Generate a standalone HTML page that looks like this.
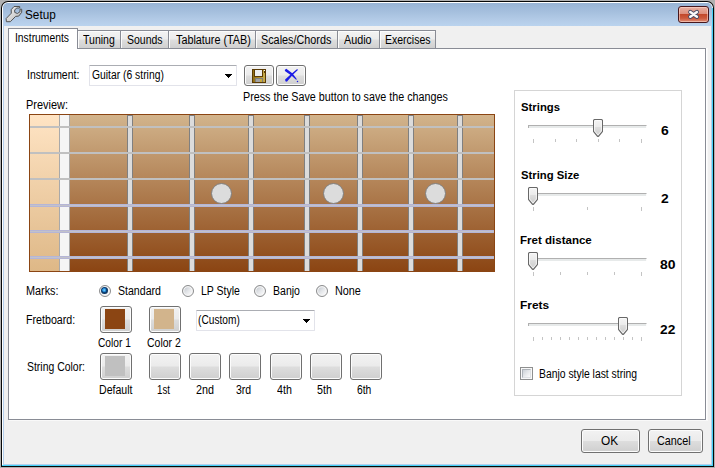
<!DOCTYPE html>
<html lang="en"><head><meta charset="utf-8"><title>Setup</title>
<style>
html,body{margin:0;padding:0}
body{width:715px;height:468px;position:relative;overflow:hidden;background:#f0f0f0;font-family:"Liberation Sans",sans-serif;font-size:12px;color:#000}
.a{position:absolute;box-sizing:border-box}
.t{position:absolute;white-space:nowrap;line-height:16px;transform-origin:0 0;color:#000}
/* window frame */
#w0{left:0;top:0;width:715px;height:468px;background:#b1b1b1}
#w1{left:1px;top:1px;width:713px;height:466px;background:#070707;border-radius:7px 7px 0 0}
#w2{left:2px;top:2px;width:711px;height:464px;background:#fff;border-radius:6px 6px 0 0;overflow:hidden}
#w2r{right:0;top:6px;width:1px;bottom:0;background:#45d2f7}
#w2b{left:0;right:0;bottom:0;height:1px;background:#45d2f7}
#w3{left:3px;top:3px;width:709px;height:462px;background:#b5cfec;border-radius:5px 5px 0 0}
#titlebar{left:3px;top:3px;width:709px;height:23px;border-radius:5px 5px 0 0;background:linear-gradient(180deg,#98b4d5 0%,#a6c0de 40%,#b2cae6 70%,#bad3ee 100%)}
#client{left:4px;top:26px;width:707px;height:438px;background:#f0f0f0}
/* close button */
#close{left:678px;top:6px;width:31px;height:17px;border:1px solid #47171d;border-radius:3px;background:linear-gradient(180deg,#e9b0a2 0%,#dd8f7d 45%,#c2492c 50%,#cc5a3d 75%,#e0907a 100%);box-shadow:inset 0 0 0 1px rgba(255,220,210,.55)}
/* tabs */
.tab{top:30px;height:18px;border-top:1px solid #898c95;border-right:1px solid #898c95;background:linear-gradient(180deg,#f3f3f3 0%,#ececec 48%,#dedede 52%,#d0d0d0 100%);box-shadow:inset 1px 1px 0 #fcfcfc}
#tabsel{left:8px;top:28px;width:70px;height:21px;border:1px solid #898c95;border-bottom:none;background:#fff}
#pane{left:8px;top:48px;width:698px;height:372px;border:1px solid #898c95;background:#fff}
#paneR{left:706px;top:48px;width:2px;height:373px;background:linear-gradient(90deg,#fff 50%,#f8f8f8 50%)}
#paneB{left:9px;top:420px;width:699px;height:1px;background:#f9f9f9}
/* combo */
.combo{border:1px solid #e2e3ea;border-top-color:#abadb3;border-radius:1px;background:#fff}
.arrow{width:0;height:0;border-left:3.5px solid transparent;border-right:3.5px solid transparent;border-top:4px solid #000}
/* buttons */
.btn{border:1px solid #707070;border-radius:3px;background:linear-gradient(180deg,#f2f2f2 0%,#ebebeb 48%,#dddddd 52%,#cfcfcf 100%);box-shadow:inset 0 0 0 1px #fcfcfc}
.sw{position:absolute;box-sizing:border-box}
/* radio */
.radio{width:12px;height:12px;border-radius:50%;border:1px solid #8b8c8d;background:linear-gradient(135deg,#c2c7cd 10%,#e4e6e9 50%,#fdfdfd 90%);box-shadow:inset 0 0 0 1.2px #f6f6f6}
.radio .on{left:1px;top:1px;width:7px;height:7px;border-radius:50%;background:radial-gradient(circle 3.5px at 46% 44%,#a6e6fb 0%,#35a4e8 30%,#1f7fd0 52%,#0f4378 66%,#0c3560 100%)}
/* slider */
.track{height:3px;border:1px solid;border-color:#b0b0b0 #fcfcfc #fcfcfc #b0b0b0;border-bottom:none;background:#e7eaea}
.tick{width:1px;height:3px;background:#c4c4c4}
.tick.l{height:4px}
.group{border:1px solid #d5d5d5;background:#fff}
.check{width:13px;height:13px;border:1px solid #8e8f8f;background:#f8f8f8}
.check .ci{left:1px;top:1px;width:9px;height:9px;border:1px solid;border-color:#aeb3b9 #dfe1e4 #dfe1e4 #aeb3b9;background:linear-gradient(135deg,#cbd0d6 0%,#e6e8ea 50%,#fbfbfb 100%)}
.fret{top:0;width:6px;height:156px;background:#dcdcdc;border:1px solid #808080;border-bottom:none}
.dot{top:68px;width:21px;height:21px;border-radius:50%;background:#dcdcdc;border:1px solid #808080}
.str{left:0;width:464px;height:2px;background:#c0c0c0}
.str.w{height:3px;background:linear-gradient(180deg,#b5b5d6 0,#b5b5d6 1px,#c2c2ca 1px,#c2c2ca 2px,#b5b5d6 2px)}
.thumb{position:absolute}

</style></head>
<body>
<div class="a" id="w0"></div>
<div class="a" id="w1"></div>
<div class="a" id="w2"><div class="a" id="w2r"></div><div class="a" id="w2b"></div></div>
<div class="a" id="w3"></div>
<div class="a" id="titlebar"></div>
<div class="a" id="client"></div>
<!-- title icon: wrench -->
<!-- close -->
<div class="a" id="close"></div>
<svg class="a" style="left:686px;top:8px" width="15" height="13" viewBox="686 8 15 13">
 <path d="M690.3 12.1 L696.9 16.8 M696.9 12.1 L690.3 16.8" stroke="#474b66" stroke-width="4.3" stroke-linecap="round" fill="none"/>
 <path d="M690.3 12.1 L696.9 16.8 M696.9 12.1 L690.3 16.8" stroke="#fafafa" stroke-width="2.5" stroke-linecap="round" fill="none"/>
</svg>
<!-- tab pane -->
<div class="a" id="paneR"></div><div class="a" id="paneB"></div>
<div class="a" id="pane"></div>
<div class="a tab" style="left:78px;width:43px"></div>
<div class="a tab" style="left:121px;width:48px"></div>
<div class="a tab" style="left:169px;width:87px"></div>
<div class="a tab" style="left:256px;width:82px"></div>
<div class="a tab" style="left:338px;width:42px"></div>
<div class="a tab" style="left:380px;width:56px"></div>
<div class="a" id="tabsel"></div>
<!-- instrument combo -->
<div class="a combo" style="left:89px;top:65px;width:148px;height:21px"></div>
<!-- save / delete buttons -->
<div class="a btn" style="left:244px;top:65px;width:30px;height:21px"></div>
<div class="a btn" style="left:276px;top:65px;width:30px;height:21px"></div>
<!-- fretboard preview -->
<div class="a" id="fb" style="left:29px;top:114px;width:466px;height:158px;border:1px solid #8b4513;background:linear-gradient(180deg,#d2b48c 0%,#8b4513 100%);overflow:hidden">
 <div class="a" style="left:0;top:0;width:29px;height:156px;background:linear-gradient(180deg,#ffe4c4 0%,#deb887 100%)"></div>
 <div class="a" style="left:29px;top:0;width:11px;height:156px;background:#f5f5f5;border-left:1px solid #a9a9a9;border-right:1px solid #a9a9a9"></div>
 <!-- frets -->
 <div class="a fret" style="left:97px"></div>
 <div class="a fret" style="left:159px"></div>
 <div class="a fret" style="left:218px"></div>
 <div class="a fret" style="left:274px"></div>
 <div class="a fret" style="left:327px"></div>
 <div class="a fret" style="left:378px"></div>
 <div class="a fret" style="left:427px"></div>
 <!-- marks -->
 <div class="a dot" style="left:181px"></div>
 <div class="a dot" style="left:293px"></div>
 <div class="a dot" style="left:395px"></div>
 <!-- strings -->
 <div class="a str" style="top:11px"></div>
 <div class="a str" style="top:37px"></div>
 <div class="a str" style="top:63px"></div>
 <div class="a str w" style="top:89px"></div>
 <div class="a str w" style="top:115px"></div>
 <div class="a str w" style="top:141px"></div>
</div>
<!-- marks radios -->
<div class="a radio" style="left:99px;top:285px"><div class="a on"></div></div>
<div class="a radio" style="left:182px;top:285px"></div>
<div class="a radio" style="left:254px;top:285px"></div>
<div class="a radio" style="left:316px;top:285px"></div>
<!-- fretboard colour buttons -->
<div class="a btn" style="left:100px;top:306px;width:32px;height:27px"><div class="sw" style="left:4px;top:2px;width:20px;height:20px;background:#8b4513"></div></div>
<div class="a btn" style="left:149px;top:306px;width:32px;height:27px"><div class="sw" style="left:4px;top:2px;width:20px;height:20px;background:#d2b48c"></div></div>
<div class="a combo" style="left:196px;top:310px;width:119px;height:21px"></div>
<!-- string colour buttons -->
<div class="a btn" style="left:100px;top:353px;width:32px;height:27px"><div class="sw" style="left:4px;top:2px;width:20px;height:20px;background:#c0c0c0"></div></div>
<div class="a btn" style="left:149px;top:353px;width:32px;height:27px"></div>
<div class="a btn" style="left:189px;top:353px;width:32px;height:27px"></div>
<div class="a btn" style="left:229px;top:353px;width:32px;height:27px"></div>
<div class="a btn" style="left:270px;top:353px;width:32px;height:27px"></div>
<div class="a btn" style="left:310px;top:353px;width:32px;height:27px"></div>
<div class="a btn" style="left:350px;top:353px;width:32px;height:27px"></div>
<!-- right group -->
<div class="a group" style="left:514px;top:90px;width:168px;height:306px"></div>
<div class="a track" style="left:528px;top:125px;width:119px"></div>
<div class="a tick l" style="left:533px;top:139px"></div>
<div class="a tick" style="left:555px;top:139px"></div>
<div class="a tick" style="left:576px;top:139px"></div>
<div class="a tick" style="left:598px;top:139px"></div>
<div class="a tick" style="left:619px;top:139px"></div>
<div class="a tick l" style="left:641px;top:139px"></div>
<svg class="a" style="left:593px;top:119px" width="10" height="19" viewBox="0 0 10 19"><defs><linearGradient id="g119" x1="0" y1="0" x2="0" y2="1"><stop offset="0" stop-color="#f5f5f5"/><stop offset=".42" stop-color="#ebebeb"/><stop offset=".45" stop-color="#dedede"/><stop offset="1" stop-color="#cbcbcb"/></linearGradient></defs><path d="M1.9 .5 H8.1 Q9.5 .5 9.5 1.9 V12.4 L5.7 17.1 Q5 17.8 4.3 17.1 L.5 12.4 V1.9 Q.5 .5 1.9 .5 Z" fill="url(#g119)" stroke="#686868" stroke-width="1.1"/><path d="M2.2 1.6 H7.8 Q8.4 1.6 8.4 2.2 V12 L5 16 L1.6 12 V2.2 Q1.6 1.6 2.2 1.6 Z" fill="none" stroke="#fdfdfd" stroke-width=".9" opacity=".85"/></svg>
<div class="a track" style="left:528px;top:193px;width:119px"></div>
<div class="a tick l" style="left:533px;top:207px"></div>
<div class="a tick" style="left:587px;top:207px"></div>
<div class="a tick l" style="left:641px;top:207px"></div>
<svg class="a" style="left:528px;top:187px" width="10" height="19" viewBox="0 0 10 19"><defs><linearGradient id="g187" x1="0" y1="0" x2="0" y2="1"><stop offset="0" stop-color="#f5f5f5"/><stop offset=".42" stop-color="#ebebeb"/><stop offset=".45" stop-color="#dedede"/><stop offset="1" stop-color="#cbcbcb"/></linearGradient></defs><path d="M1.9 .5 H8.1 Q9.5 .5 9.5 1.9 V12.4 L5.7 17.1 Q5 17.8 4.3 17.1 L.5 12.4 V1.9 Q.5 .5 1.9 .5 Z" fill="url(#g187)" stroke="#686868" stroke-width="1.1"/><path d="M2.2 1.6 H7.8 Q8.4 1.6 8.4 2.2 V12 L5 16 L1.6 12 V2.2 Q1.6 1.6 2.2 1.6 Z" fill="none" stroke="#fdfdfd" stroke-width=".9" opacity=".85"/></svg>
<div class="a track" style="left:528px;top:258px;width:119px"></div>
<div class="a tick l" style="left:533px;top:272px"></div>
<div class="a tick" style="left:560px;top:272px"></div>
<div class="a tick" style="left:587px;top:272px"></div>
<div class="a tick" style="left:614px;top:272px"></div>
<div class="a tick l" style="left:641px;top:272px"></div>
<svg class="a" style="left:528px;top:252px" width="10" height="19" viewBox="0 0 10 19"><defs><linearGradient id="g252" x1="0" y1="0" x2="0" y2="1"><stop offset="0" stop-color="#f5f5f5"/><stop offset=".42" stop-color="#ebebeb"/><stop offset=".45" stop-color="#dedede"/><stop offset="1" stop-color="#cbcbcb"/></linearGradient></defs><path d="M1.9 .5 H8.1 Q9.5 .5 9.5 1.9 V12.4 L5.7 17.1 Q5 17.8 4.3 17.1 L.5 12.4 V1.9 Q.5 .5 1.9 .5 Z" fill="url(#g252)" stroke="#686868" stroke-width="1.1"/><path d="M2.2 1.6 H7.8 Q8.4 1.6 8.4 2.2 V12 L5 16 L1.6 12 V2.2 Q1.6 1.6 2.2 1.6 Z" fill="none" stroke="#fdfdfd" stroke-width=".9" opacity=".85"/></svg>
<div class="a track" style="left:528px;top:323px;width:119px"></div>
<div class="a tick l" style="left:533px;top:337px"></div>
<div class="a tick" style="left:542px;top:337px"></div>
<div class="a tick" style="left:551px;top:337px"></div>
<div class="a tick" style="left:560px;top:337px"></div>
<div class="a tick" style="left:569px;top:337px"></div>
<div class="a tick" style="left:578px;top:337px"></div>
<div class="a tick" style="left:587px;top:337px"></div>
<div class="a tick" style="left:596px;top:337px"></div>
<div class="a tick" style="left:605px;top:337px"></div>
<div class="a tick" style="left:614px;top:337px"></div>
<div class="a tick" style="left:623px;top:337px"></div>
<div class="a tick" style="left:632px;top:337px"></div>
<div class="a tick l" style="left:641px;top:337px"></div>
<svg class="a" style="left:618px;top:317px" width="10" height="19" viewBox="0 0 10 19"><defs><linearGradient id="g317" x1="0" y1="0" x2="0" y2="1"><stop offset="0" stop-color="#f5f5f5"/><stop offset=".42" stop-color="#ebebeb"/><stop offset=".45" stop-color="#dedede"/><stop offset="1" stop-color="#cbcbcb"/></linearGradient></defs><path d="M1.9 .5 H8.1 Q9.5 .5 9.5 1.9 V12.4 L5.7 17.1 Q5 17.8 4.3 17.1 L.5 12.4 V1.9 Q.5 .5 1.9 .5 Z" fill="url(#g317)" stroke="#686868" stroke-width="1.1"/><path d="M2.2 1.6 H7.8 Q8.4 1.6 8.4 2.2 V12 L5 16 L1.6 12 V2.2 Q1.6 1.6 2.2 1.6 Z" fill="none" stroke="#fdfdfd" stroke-width=".9" opacity=".85"/></svg>
<div class="a check" style="left:520px;top:367px"><div class="a ci"></div></div>
<!-- OK / Cancel -->
<div class="a btn" style="left:581px;top:429px;width:59px;height:24px"></div>
<div class="a btn" style="left:648px;top:429px;width:55px;height:24px"></div>
<!-- icon overlay (page pixel coordinates) -->
<svg class="a" id="icons" style="left:0;top:0;pointer-events:none" width="715" height="468" viewBox="0 0 715 468">
 <defs>
  <linearGradient id="wg" x1="0" y1="0" x2="1" y2="1"><stop offset="0" stop-color="#f4f4f4"/><stop offset=".55" stop-color="#d4d4d4"/><stop offset="1" stop-color="#a9a9a9"/></linearGradient>
  <linearGradient id="fg" x1="0" y1="0" x2="1" y2="0"><stop offset="0" stop-color="#8e6c12"/><stop offset=".3" stop-color="#a8841f"/><stop offset="1" stop-color="#c7ad4e"/></linearGradient>
 </defs>
 <!-- wrench -->
 <path d="M6.1 18.6 L11.3 13.2 L11.2 9.7 L14 6.5 L19.7 6.5 L19.7 8 L16.9 8 L14.7 9.8 L14.7 12.4 L17.4 13.5 L20 11.7 L20 9.2 L21.7 9.2 L21.7 12.3 L18.7 16.1 L15.6 16.4 L10.4 21.7 L6.4 21.7 Z" fill="url(#wg)" stroke="#4c4c4c" stroke-width=".95" stroke-linejoin="round"/>
 <!-- floppy -->
 <g shape-rendering="crispEdges">
  <rect x="252" y="69" width="14" height="14" fill="#5a3a04"/>
  <rect x="253" y="70" width="12" height="12" fill="url(#fg)"/>
  <rect x="254" y="69" width="9" height="8" fill="#5a3a04"/>
  <rect x="255" y="70" width="7" height="6" fill="#ededed"/>
  <rect x="255" y="78" width="8" height="4" fill="#7d7d7d"/>
  <rect x="256" y="79" width="4" height="3" fill="#a2a2a2"/>
  <rect x="260" y="79" width="2" height="3" fill="#c9aa3c"/>
  <rect x="264" y="70" width="1" height="1" fill="#ffffff"/>
  <rect x="264" y="71" width="1" height="2" fill="#5a3a04"/>
 </g>
 <!-- delete X -->
 <g fill="#1b1be6">
  <path d="M284.7 69.9 L286.3 68.7 L292.6 73.6 L296.9 79.2 L296.1 79.8 L291.4 75.6 L285.2 71.3 Z"/>
  <circle cx="297.5" cy="81.5" r=".75"/>
  <path d="M285.1 79.4 L291.2 73.9 L297.2 69 L297.9 69.9 L292.6 75.1 L286.9 81.7 L285.4 81.3 Z"/>
 </g>
 <!-- combo arrows -->
 <g shape-rendering="crispEdges" fill="#000">
  <rect x="225" y="74" width="7" height="1"/><rect x="226" y="75" width="5" height="1"/><rect x="227" y="76" width="3" height="1"/><rect x="228" y="77" width="1" height="1"/>
  <rect x="303" y="319" width="7" height="1"/><rect x="304" y="320" width="5" height="1"/><rect x="305" y="321" width="3" height="1"/><rect x="306" y="322" width="1" height="1"/>
 </g>
</svg>

<!-- text labels -->
<span class="t" id="t_title" style="left:24.60px;top:6.84px;font-size:12.7px;transform:scaleX(0.9266)">Setup</span>
<span class="t" id="t_instr" style="left:26.66px;top:66.84px;font-size:12px;transform:scaleX(0.8715)">Instrument:</span>
<span class="t" id="t_guitar" style="left:91.80px;top:66.84px;font-size:12px;transform:scaleX(0.8620)">Guitar (6 string)</span>
<span class="t" id="t_press" style="left:242.55px;top:88.84px;font-size:12px;transform:scaleX(0.8951)">Press the Save button to save the changes</span>
<span class="t" id="t_prev" style="left:26.33px;top:96.84px;font-size:12px;transform:scaleX(0.9125)">Preview:</span>
<span class="t" id="t_marks" style="left:26.17px;top:282.84px;font-size:12px;transform:scaleX(0.9046)">Marks:</span>
<span class="t" id="t_std" style="left:117.97px;top:282.84px;font-size:12px;transform:scaleX(0.8813)">Standard</span>
<span class="t" id="t_lp" style="left:200.55px;top:282.84px;font-size:12px;transform:scaleX(0.8757)">LP Style</span>
<span class="t" id="t_banjo" style="left:273.09px;top:282.84px;font-size:12px;transform:scaleX(0.8773)">Banjo</span>
<span class="t" id="t_none" style="left:335.13px;top:282.84px;font-size:12px;transform:scaleX(0.9012)">None</span>
<span class="t" id="t_fretb" style="left:26.01px;top:312.24px;font-size:12px;transform:scaleX(0.8889)">Fretboard:</span>
<span class="t" id="t_custom" style="left:197.61px;top:311.84px;font-size:12px;transform:scaleX(0.8471)">(Custom)</span>
<span class="t" id="t_c1" style="left:97.87px;top:334.84px;font-size:12px;transform:scaleX(0.8496)">Color 1</span>
<span class="t" id="t_c2" style="left:147.15px;top:334.84px;font-size:12px;transform:scaleX(0.8728)">Color 2</span>
<span class="t" id="t_strc" style="left:26.52px;top:358.84px;font-size:12px;transform:scaleX(0.8700)">String Color:</span>
<span class="t" id="t_def" style="left:98.66px;top:381.84px;font-size:12px;transform:scaleX(0.8827)">Default</span>
<span class="t" id="t_1st" style="left:157.44px;top:381.84px;font-size:12px;transform:scaleX(0.8098)">1st</span>
<span class="t" id="t_2nd" style="left:196.45px;top:381.84px;font-size:12px;transform:scaleX(0.8978)">2nd</span>
<span class="t" id="t_3rd" style="left:236.08px;top:381.84px;font-size:12px;transform:scaleX(0.8776)">3rd</span>
<span class="t" id="t_4th" style="left:276.59px;top:381.84px;font-size:12px;transform:scaleX(0.8904)">4th</span>
<span class="t" id="t_5th" style="left:317.04px;top:381.84px;font-size:12px;transform:scaleX(0.8907)">5th</span>
<span class="t" id="t_6th" style="left:356.90px;top:381.84px;font-size:12px;transform:scaleX(0.8618)">6th</span>
<span class="t" id="t_strings" style="left:520.83px;top:99.02px;font-size:11.5px; font-weight:bold;transform:scaleX(0.9847)">Strings</span>
<span class="t" id="t_strsize" style="left:520.84px;top:167.02px;font-size:11.5px; font-weight:bold;transform:scaleX(0.9822)">String Size</span>
<span class="t" id="t_fretd" style="left:520.35px;top:232.02px;font-size:11.5px; font-weight:bold;transform:scaleX(1.0028)">Fret distance</span>
<span class="t" id="t_frets" style="left:520.21px;top:297.02px;font-size:11.5px; font-weight:bold;transform:scaleX(1.0365)">Frets</span>
<span class="t" id="t_v6" style="left:661.47px;top:122.70px;font-size:13px; font-weight:bold;transform:scaleX(1.0700)">6</span>
<span class="t" id="t_v2" style="left:660.50px;top:191.10px;font-size:13px; font-weight:bold;transform:scaleX(1.0700)">2</span>
<span class="t" id="t_v80" style="left:659.96px;top:256.70px;font-size:13px; font-weight:bold;transform:scaleX(1.0700)">80</span>
<span class="t" id="t_v22" style="left:660.46px;top:321.50px;font-size:13px; font-weight:bold;transform:scaleX(1.0600)">22</span>
<span class="t" id="t_bsls" style="left:538.95px;top:365.84px;font-size:12px;transform:scaleX(0.8641)">Banjo style last string</span>
<span class="t" id="t_ok" style="left:601.04px;top:432.50px;font-size:13px;transform:scaleX(0.9126)">OK</span>
<span class="t" id="t_cancel" style="left:657.03px;top:432.50px;font-size:13px;transform:scaleX(0.8305)">Cancel</span>
<span class="t" id="t_tab0" style="left:14.54px;top:29.84px;font-size:12px;transform:scaleX(0.8616)">Instruments</span>
<span class="t" id="t_tab1" style="left:83.09px;top:31.84px;font-size:12px;transform:scaleX(0.8769)">Tuning</span>
<span class="t" id="t_tab2" style="left:126.52px;top:31.84px;font-size:12px;transform:scaleX(0.8731)">Sounds</span>
<span class="t" id="t_tab3" style="left:176.18px;top:31.84px;font-size:12px;transform:scaleX(0.9006)">Tablature (TAB)</span>
<span class="t" id="t_tab4" style="left:260.65px;top:31.84px;font-size:12px;transform:scaleX(0.9013)">Scales/Chords</span>
<span class="t" id="t_tab5" style="left:344.36px;top:31.84px;font-size:12px;transform:scaleX(0.8980)">Audio</span>
<span class="t" id="t_tab6" style="left:384.59px;top:31.84px;font-size:12px;transform:scaleX(0.8757)">Exercises</span>
</body></html>
